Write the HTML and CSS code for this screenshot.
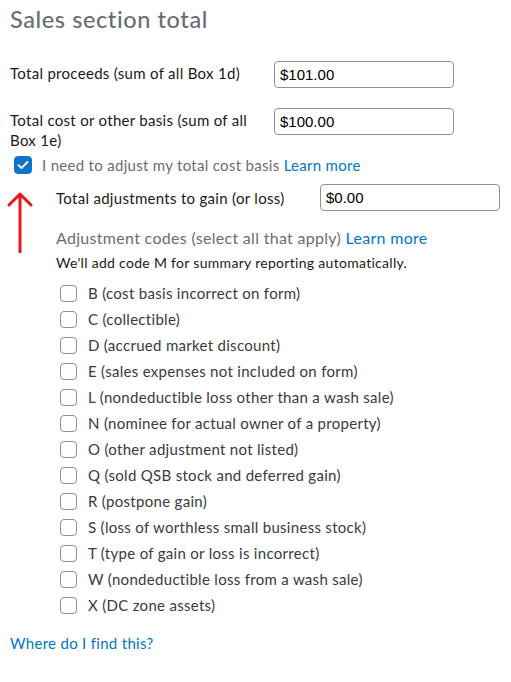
FILE: index.html
```html
<!DOCTYPE html>
<html>
<head>
<meta charset="utf-8">
<link rel="stylesheet" href="styles.css">
</head>
<body>
<div class="page">
  <h1 class="title">Sales section total</h1>
  <div class="field-row first-row">
    <label class="field-label">Total proceeds (sum of all Box 1d)</label>
    <div class="input">$101.00</div>
  </div>
  <div class="field-row second-row">
    <label class="field-label">Total cost or other basis (sum of all Box 1e)</label>
    <div class="input">$100.00</div>
  </div>
  <div class="check-row">
    <span class="cb checked"><svg width="12" height="10" viewBox="0 0 12 10"><path d="M1.5 5.2 L4.5 8 L10.5 2" fill="none" stroke="#fff" stroke-width="1.8" stroke-linecap="round" stroke-linejoin="round"/></svg></span>
    <span class="check-text">I need to adjust my total cost basis <a class="link">Learn more</a></span>
    <svg class="arrow" width="30" height="62" viewBox="0 0 30 62"><path d="M15 3 L15 61 M4 14 L15 3 L26 14" fill="none" stroke="#e8191c" stroke-width="3" stroke-linecap="round" stroke-linejoin="round"/></svg>
  </div>
  <div class="sub">
    <div class="field-row sub-row">
      <label class="field-label sub-label">Total adjustments to gain (or loss)</label>
      <div class="input">$0.00</div>
    </div>
    <div class="codes-head">Adjustment codes (select all that apply) <a class="link">Learn more</a></div>
    <div class="codes-note">We'll add code M for summary reporting automatically.</div>
    <ul class="codes">
      <li><span class="cb"></span>B (cost basis incorrect on form)</li>
      <li><span class="cb"></span>C (collectible)</li>
      <li><span class="cb"></span>D (accrued market discount)</li>
      <li><span class="cb"></span>E (sales expenses not included on form)</li>
      <li><span class="cb"></span>L (nondeductible loss other than a wash sale)</li>
      <li><span class="cb"></span>N (nominee for actual owner of a property)</li>
      <li><span class="cb"></span>O (other adjustment not listed)</li>
      <li><span class="cb"></span>Q (sold QSB stock and deferred gain)</li>
      <li><span class="cb"></span>R (postpone gain)</li>
      <li><span class="cb"></span>S (loss of worthless small business stock)</li>
      <li><span class="cb"></span>T (type of gain or loss is incorrect)</li>
      <li><span class="cb"></span>W (nondeductible loss from a wash sale)</li>
      <li><span class="cb"></span>X (DC zone assets)</li>
    </ul>
  </div>
  <a class="link where">Where do I find this?</a>
</div>
</body>
</html>
```
FILE: styles.css
```css
* { box-sizing: border-box; }
html, body { margin: 0; padding: 0; background: #fff; }
body {
  font-family: Lato, "Noto Sans", sans-serif;
  color: #1a1a1a;
  font-size: 15px;
  letter-spacing: 0.3px;
}
.page {
  padding: 4px 10px 0 10px;
  display: flex;
  flex-direction: column;
}
.title {
  margin: 0;
  font-size: 23.5px;
  font-weight: 500;
  color: #6b6c72;
  line-height: 30px;
  letter-spacing: 0.6px;
}
.field-row {
  display: grid;
  grid-template-columns: 264px 180px;
  align-items: start;
}
.first-row { margin-top: 27px; }
.second-row { margin-top: 20px; }
.field-label {
  line-height: 20px;
  padding-right: 12px;
  padding-top: 2px;
}
.sub-label { padding-top: 4px; }
.input {
  height: 27px;
  border: 1px solid #8d9096;
  border-radius: 4px;
  font-family: "Liberation Sans", Arial, sans-serif;
  font-size: 15px;
  letter-spacing: 0;
  line-height: 25px;
  padding-left: 5px;
  color: #000;
}
.check-row {
  position: relative;
  display: flex;
  align-items: center;
  margin-top: 5px;
  margin-left: 4px;
  height: 20px;
}
.cb {
  display: inline-flex;
  align-items: center;
  justify-content: center;
  width: 18px;
  height: 18px;
  border: 1.5px solid #8d9096;
  border-radius: 4px;
  flex: none;
  background: #fff;
}
.cb.checked {
  background: #1172c9;
  border-color: #1172c9;
}
.check-text {
  margin-left: 10px;
  color: #6b6c72;
}
.link {
  color: #0077c5;
  text-decoration: none;
}
.arrow {
  position: absolute;
  left: -9px;
  top: 36px;
}
.sub {
  margin-left: 46px;
  display: flex;
  flex-direction: column;
}
.sub-row {
  grid-template-columns: 264px 180px;
  margin-top: 9px;
}
.codes-head {
  margin-top: 16px;
  font-size: 16px;
  color: #6b6c72;
  line-height: 22px;
}
.codes-note {
  margin-top: 5px;
  font-size: 14px;
  line-height: 18px;
  color: #1a1a1a;
}
.codes {
  list-style: none;
  margin: 8px 0 0 0;
  padding: 0 0 0 4px;
  display: flex;
  flex-direction: column;
}
.codes li {
  display: flex;
  align-items: center;
  height: 26px;
  color: #393a3d;
}
.codes .cb {
  width: 17px;
  height: 17px;
  margin-right: 11px;
}
.where {
  margin-top: 15px;
  display: block;
  line-height: 20px;
}
```
